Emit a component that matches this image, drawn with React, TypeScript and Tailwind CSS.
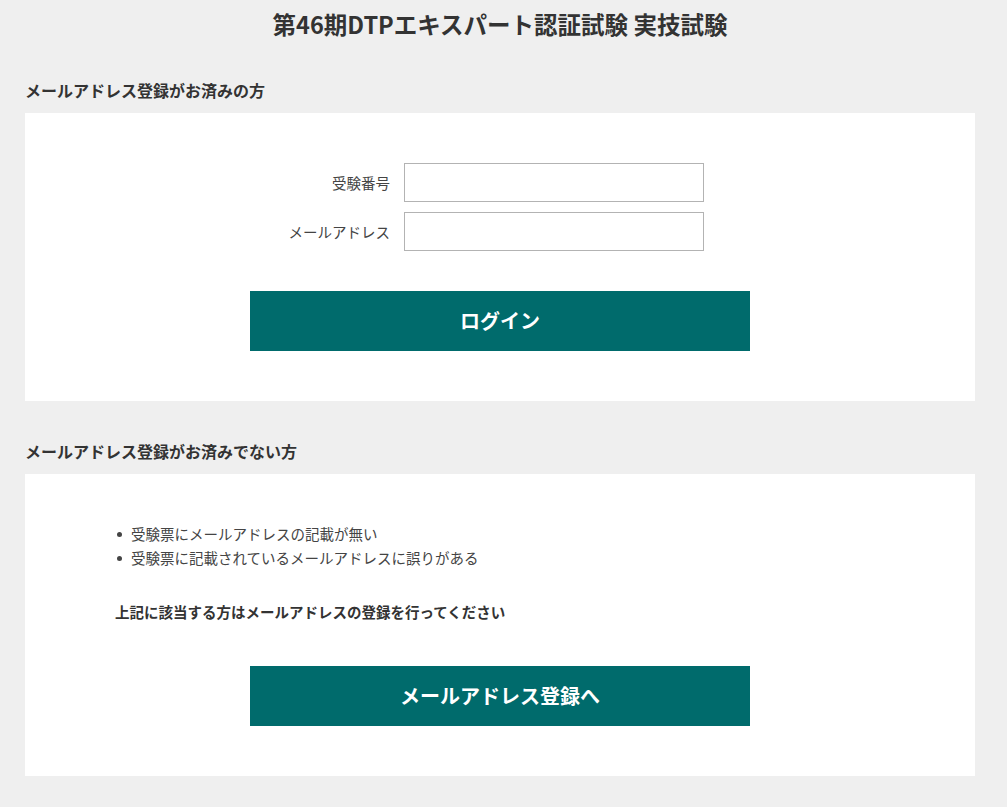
import React from 'react';

const font = { fontFamily: '"Noto Sans CJK JP", "Noto Sans", sans-serif' };

const fields = [
  { label: '受験番号', name: 'examNo' },
  { label: 'メールアドレス', name: 'email' },
];

const reasons = [
  '受験票にメールアドレスの記載が無い',
  '受験票に記載されているメールアドレスに誤りがある',
];

export default function App() {
  return (
    <div className="min-h-[807px] bg-[#efefef] text-[#333]" style={font}>
      <div className="w-[1000px]">
        <h1 className="pt-[9px] text-center text-[23.5px] font-bold leading-[30px] text-[#333]">
          第46期DTPエキスパート認証試験 実技試験
        </h1>

        <div className="px-[25px] pb-[31px]">
          {/* ログイン */}
          <h2 className="mt-[39px] text-[16px] font-bold leading-[24px]">
            メールアドレス登録がお済みの方
          </h2>
          <div className="mt-[11px] bg-white py-[50px]">
            <div className="flex flex-col gap-[10px] pl-[245px]">
              {fields.map((f) => (
                <div key={f.name} className="flex items-center">
                  <label className="w-[120px] text-right text-[14.5px] text-[#444]">{f.label}</label>
                  <input
                    name={f.name}
                    className="ml-[14px] h-[39px] w-[300px] border border-[#b3b3b3] bg-white px-2 outline-none"
                  />
                </div>
              ))}
            </div>
            <button className="mx-auto mt-[40px] flex h-[60px] w-[500px] items-center justify-center bg-[#006b6c] text-[20px] font-bold text-white">
              ログイン
            </button>
          </div>

          {/* 未登録 */}
          <h2 className="mt-[38px] text-[16px] font-bold leading-[24px]">
            メールアドレス登録がお済みでない方
          </h2>
          <div className="mt-[11px] bg-white pt-[48px] pb-[50px]">
            <div className="pl-[90px]">
              <ul className="text-[14.5px] leading-[24px] text-[#444]">
                {reasons.map((r) => (
                  <li key={r} className="flex items-center">
                    <span className="ml-[2px] mr-[9px] h-[5px] w-[5px] rounded-full bg-[#444]" />
                    {r}
                  </li>
                ))}
              </ul>
              <p className="mt-[30px] text-[14.5px] font-bold leading-[24px] text-[#333]">
                上記に該当する方はメールアドレスの登録を行ってください
              </p>
            </div>
            <button className="mx-auto mt-[42px] flex h-[60px] w-[500px] items-center justify-center bg-[#006b6c] text-[20px] font-bold text-white">
              メールアドレス登録へ
            </button>
          </div>
        </div>
      </div>
    </div>
  );
}
